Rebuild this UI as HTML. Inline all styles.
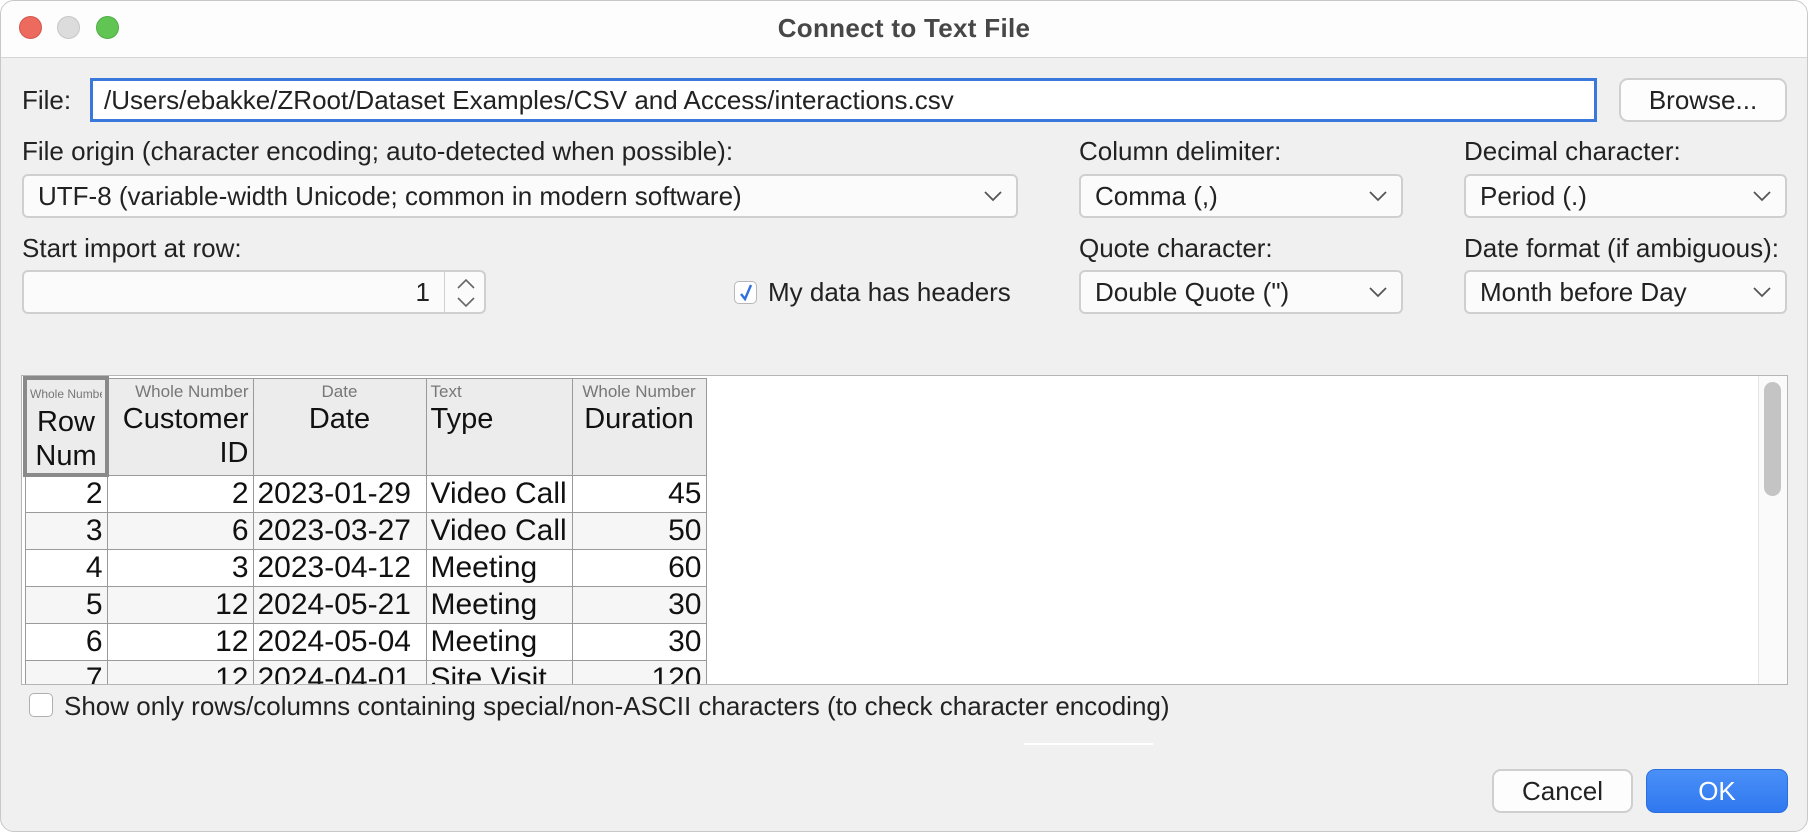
<!DOCTYPE html>
<html><head><meta charset="utf-8"><style>
*{box-sizing:border-box;margin:0;padding:0}
body{width:1808px;height:832px;background:#fff;font-family:"Liberation Sans",sans-serif;color:#222;position:relative;overflow:hidden}
.win{position:absolute;left:0;top:0;width:1808px;height:832px;background:#f0f0f0;border:1px solid #c8c8c8;border-radius:14px;overflow:hidden}
.tb{position:absolute;left:0;top:0;width:100%;height:57px;background:#fdfdfd;border-bottom:1px solid #d6d6d6}
.light{position:absolute;top:15px;width:23px;height:23px;border-radius:50%}
.ttl{position:absolute;left:0;width:100%;top:12px;text-align:center;font-weight:bold;font-size:26px;color:#474747;letter-spacing:0.3px}
.a{position:absolute;white-space:nowrap}
.lbl{font-size:26px;color:#222}
.box{position:absolute;background:#fbfbfb;border:2px solid #cfcfcf;border-radius:6px;font-size:26px;line-height:40px;padding-left:14px;white-space:nowrap}
.box svg{position:absolute;right:14px;top:14px}
.btn{position:absolute;background:#fdfdfd;border:2px solid #cfcfcf;border-radius:9px;font-size:26px;text-align:center}
table{border-collapse:collapse;font-size:30px;color:#111;table-layout:fixed}
td{border:1px solid #9a9a9a;height:37px;padding:0 4px;line-height:34px;white-space:nowrap;overflow:hidden}
th{font-weight:normal;background:#ececec;border:1px solid #9a9a9a;vertical-align:top;height:92px;padding:0 4px;overflow:hidden}
th small{display:block;font-size:17px;color:#777;line-height:21px;margin-top:2px;white-space:nowrap}
th span{display:block;font-size:29px;line-height:34px;color:#111}
tr.alt td{background:#f6f6f6}
.r{text-align:right}
</style></head><body>
<div class="win">
<div class="tb">
<div class="light" style="left:18px;background:#ec6a5e;border:1px solid #d4554a"></div>
<div class="light" style="left:56px;background:#dcdcdc;border:1px solid #c6c6c6"></div>
<div class="light" style="left:95px;background:#61c554;border:1px solid #4fad43"></div>
<div class="ttl">Connect to Text File</div>
</div>

<div class="a lbl" style="left:21px;top:84px">File:</div>
<div class="a" style="left:89px;top:77px;width:1507px;height:44px;background:#fff;border:3px solid #3a78dc;font-size:26px;line-height:38px;padding-left:11px">/Users/ebakke/ZRoot/Dataset Examples/CSV and Access/interactions.csv</div>
<div class="btn" style="left:1618px;top:77px;width:168px;height:44px;line-height:40px">Browse...</div>

<div class="a lbl" style="left:21px;top:135px">File origin (character encoding; auto-detected when possible):</div>
<div class="box" style="left:21px;top:173px;width:996px;height:44px">UTF-8 (variable-width Unicode; common in modern software)<svg width="18" height="12"><path d="M1 2l8 8 8-8" fill="none" stroke="#555" stroke-width="1.8"/></svg></div>

<div class="a lbl" style="left:1078px;top:135px">Column delimiter:</div>
<div class="box" style="left:1078px;top:173px;width:324px;height:44px">Comma (,)<svg width="18" height="12"><path d="M1 2l8 8 8-8" fill="none" stroke="#555" stroke-width="1.8"/></svg></div>

<div class="a lbl" style="left:1463px;top:135px">Decimal character:</div>
<div class="box" style="left:1463px;top:173px;width:323px;height:44px">Period (.)<svg width="18" height="12"><path d="M1 2l8 8 8-8" fill="none" stroke="#555" stroke-width="1.8"/></svg></div>

<div class="a lbl" style="left:21px;top:232px">Start import at row:</div>
<div class="box" style="left:21px;top:269px;width:464px;height:44px;padding:0">
<div style="position:absolute;left:0;top:0;width:420px;text-align:right;padding-right:14px">1</div>
<div style="position:absolute;left:420px;top:0;width:1px;height:40px;background:#d0d0d0"></div>
<svg width="24" height="32" style="position:absolute;left:430px;top:5px;right:auto"><path d="M4 11l8-8 8 8M4 21l8 8 8-8" fill="none" stroke="#666" stroke-width="1.6"/></svg>
</div>

<div class="a" style="left:733px;top:280px;width:23px;height:23px;border:1.5px solid #b8b8b8;border-radius:5px;background:#fff"><svg width="20" height="20" style="position:absolute;left:1px;top:1px"><path d="M5 11l4 5 6-14" fill="none" stroke="#2f6fe0" stroke-width="2.4"/></svg></div>
<div class="a lbl" style="left:767px;top:276px">My data has headers</div>

<div class="a lbl" style="left:1078px;top:232px">Quote character:</div>
<div class="box" style="left:1078px;top:269px;width:324px;height:44px">Double Quote (")<svg width="18" height="12"><path d="M1 2l8 8 8-8" fill="none" stroke="#555" stroke-width="1.8"/></svg></div>

<div class="a lbl" style="left:1463px;top:232px">Date format (if ambiguous):</div>
<div class="box" style="left:1463px;top:269px;width:323px;height:44px">Month before Day<svg width="18" height="12"><path d="M1 2l8 8 8-8" fill="none" stroke="#555" stroke-width="1.8"/></svg></div>

<div class="a" style="left:20px;top:374px;width:1767px;height:310px;background:#fff;border:1px solid #b5b5b5;overflow:hidden">
<table style="position:absolute;left:1px;top:0px;width:681px">
<colgroup><col style="width:82px"><col style="width:146px"><col style="width:173px"><col style="width:146px"><col style="width:134px"></colgroup>
<tr>
<th style="border:4px solid #8a8a8a;padding:0 3px"><small style="font-size:12px;overflow:hidden;margin-top:4px">Whole Number</small><span style="text-align:center">Row<br>Num</span></th>
<th class="r"><small>Whole Number</small><span>Customer<br>ID</span></th>
<th style="text-align:center"><small>Date</small><span>Date</span></th>
<th style="text-align:left"><small>Text</small><span>Type</span></th>
<th style="text-align:center"><small>Whole Number</small><span>Duration</span></th>
</tr>
<tr><td class="r">2</td><td class="r">2</td><td>2023-01-29</td><td>Video Call</td><td class="r">45</td></tr>
<tr class="alt"><td class="r">3</td><td class="r">6</td><td>2023-03-27</td><td>Video Call</td><td class="r">50</td></tr>
<tr><td class="r">4</td><td class="r">3</td><td>2023-04-12</td><td>Meeting</td><td class="r">60</td></tr>
<tr class="alt"><td class="r">5</td><td class="r">12</td><td>2024-05-21</td><td>Meeting</td><td class="r">30</td></tr>
<tr><td class="r">6</td><td class="r">12</td><td>2024-05-04</td><td>Meeting</td><td class="r">30</td></tr>
<tr class="alt"><td class="r">7</td><td class="r">12</td><td>2024-04-01</td><td>Site Visit</td><td class="r">120</td></tr>
</table>
<div style="position:absolute;right:0;top:0;width:29px;height:310px;background:#fafafa;border-left:1px solid #e4e4e4"></div>
<div style="position:absolute;right:6px;top:6px;width:17px;height:114px;background:#c4c4c4;border-radius:9px"></div>
</div>

<div class="a" style="left:28px;top:692px;width:24px;height:24px;border:1.5px solid #b0b0b0;border-radius:5px;background:#fff"></div>
<div class="a" style="left:63px;top:690px;font-size:26px">Show only rows/columns containing special/non-ASCII characters (to check character encoding)</div>

<div class="a" style="left:1023px;top:742px;width:129px;height:2px;background:#fff"></div>

<div class="btn" style="left:1491px;top:768px;width:141px;height:44px;line-height:40px">Cancel</div>
<div class="btn" style="left:1645px;top:768px;width:142px;height:44px;line-height:42px;background:linear-gradient(#4a90f8,#2f78ef);border:1px solid #2a6fe0;color:#fff">OK</div>
</div>
</body></html>
